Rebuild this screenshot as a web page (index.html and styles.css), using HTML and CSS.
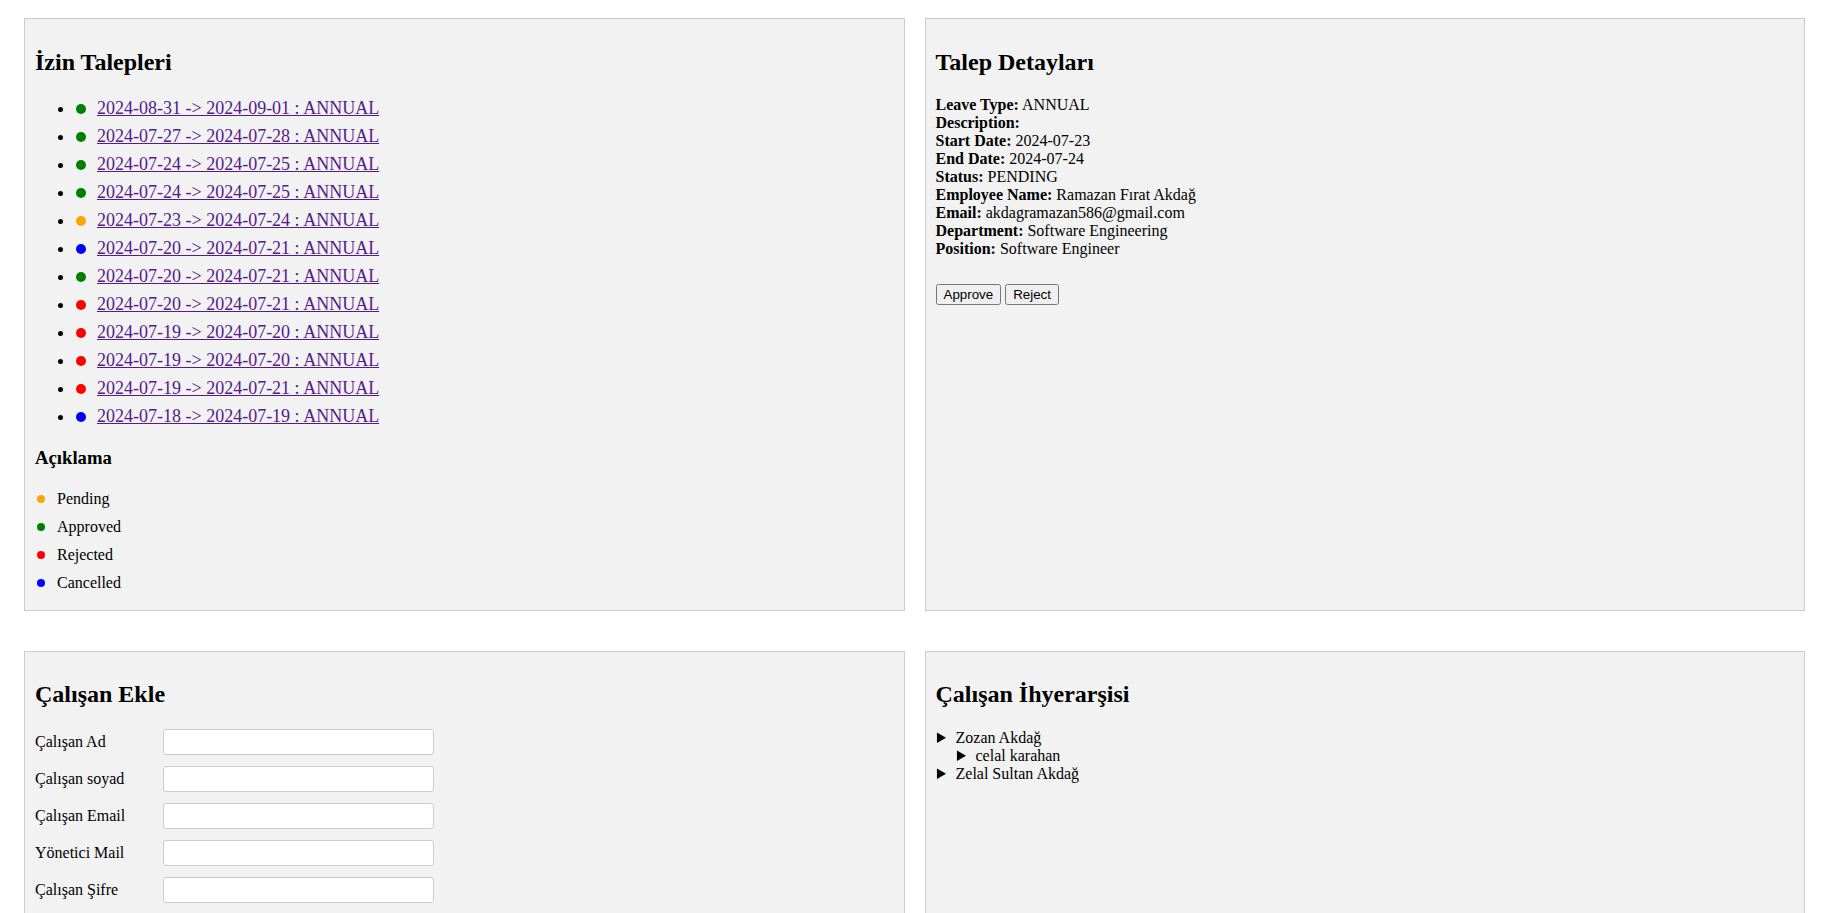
FILE: index.html
```html
<!DOCTYPE html>
<html lang="tr">
<head>
<meta charset="utf-8">
<title>İzin Yönetimi</title>
<link rel="stylesheet" href="styles.css">
</head>
<body>
<div class="dashboard">
  <section class="panel">
    <h2 class="panel-title">İzin Talepleri</h2>
    <ul class="requests">
      <li><span class="dot approved"></span><a href="#">2024-08-31 -&gt; 2024-09-01 : ANNUAL</a></li>
      <li><span class="dot approved"></span><a href="#">2024-07-27 -&gt; 2024-07-28 : ANNUAL</a></li>
      <li><span class="dot approved"></span><a href="#">2024-07-24 -&gt; 2024-07-25 : ANNUAL</a></li>
      <li><span class="dot approved"></span><a href="#">2024-07-24 -&gt; 2024-07-25 : ANNUAL</a></li>
      <li><span class="dot pending"></span><a href="#">2024-07-23 -&gt; 2024-07-24 : ANNUAL</a></li>
      <li><span class="dot cancelled"></span><a href="#">2024-07-20 -&gt; 2024-07-21 : ANNUAL</a></li>
      <li><span class="dot approved"></span><a href="#">2024-07-20 -&gt; 2024-07-21 : ANNUAL</a></li>
      <li><span class="dot rejected"></span><a href="#">2024-07-20 -&gt; 2024-07-21 : ANNUAL</a></li>
      <li><span class="dot rejected"></span><a href="#">2024-07-19 -&gt; 2024-07-20 : ANNUAL</a></li>
      <li><span class="dot rejected"></span><a href="#">2024-07-19 -&gt; 2024-07-20 : ANNUAL</a></li>
      <li><span class="dot rejected"></span><a href="#">2024-07-19 -&gt; 2024-07-21 : ANNUAL</a></li>
      <li><span class="dot cancelled"></span><a href="#">2024-07-18 -&gt; 2024-07-19 : ANNUAL</a></li>
    </ul>
    <h3 class="legend-title">Açıklama</h3>
    <div class="legend">
      <div class="legend-item"><span class="legend-dot pending"></span><span>Pending</span></div>
      <div class="legend-item"><span class="legend-dot approved"></span><span>Approved</span></div>
      <div class="legend-item"><span class="legend-dot rejected"></span><span>Rejected</span></div>
      <div class="legend-item"><span class="legend-dot cancelled"></span><span>Cancelled</span></div>
    </div>
  </section>

  <section class="panel">
    <h2 class="panel-title">Talep Detayları</h2>
    <div class="details">
      <div><strong>Leave Type:</strong> ANNUAL</div>
      <div><strong>Description:</strong></div>
      <div><strong>Start Date:</strong> 2024-07-23</div>
      <div><strong>End Date:</strong> 2024-07-24</div>
      <div><strong>Status:</strong> PENDING</div>
      <div><strong>Employee Name:</strong> Ramazan Fırat Akdağ</div>
      <div><strong>Email:</strong> akdagramazan586@gmail.com</div>
      <div><strong>Department:</strong> Software Engineering</div>
      <div><strong>Position:</strong> Software Engineer</div>
    </div>
    <div class="actions">
      <button type="button" class="btn">Approve</button>
      <button type="button" class="btn">Reject</button>
    </div>
  </section>

  <section class="panel panel--lower">
    <h2 class="panel-title">Çalışan Ekle</h2>
    <form class="form">
      <div class="form-row"><label class="form-label">Çalışan Ad</label><input class="form-input" type="text"></div>
      <div class="form-row"><label class="form-label">Çalışan soyad</label><input class="form-input" type="text"></div>
      <div class="form-row"><label class="form-label">Çalışan Email</label><input class="form-input" type="email"></div>
      <div class="form-row"><label class="form-label">Yönetici Mail</label><input class="form-input" type="email"></div>
      <div class="form-row"><label class="form-label">Çalışan Şifre</label><input class="form-input" type="password"></div>
    </form>
  </section>

  <section class="panel panel--lower">
    <h2 class="panel-title">Çalışan İhyerarşisi</h2>
    <ul class="tree">
      <li>Zozan Akdağ
        <ul class="tree">
          <li>celal karahan</li>
        </ul>
      </li>
      <li>Zelal Sultan Akdağ</li>
    </ul>
  </section>
</div>
</body>
</html>
```

FILE: styles.css
```css
html, body {
  background: #ffffff;
}

body {
  margin: 0;
  font-family: "Liberation Serif", "Times New Roman", serif;
  font-size: 16px;
  color: #000000;
}

.dashboard {
  display: grid;
  grid-template-columns: 1fr 1fr;
  column-gap: 20px;
  row-gap: 40px;
  padding: 18px 20px 0 24px;
}

.panel {
  background: #f2f2f2;
  border: 1px solid #cccccc;
  padding: 10px;
  min-width: 0;
}

.panel-title {
  font-size: 24px;
  font-weight: bold;
  margin: 20px 0;
}

.panel--lower .panel-title {
  margin: 19px 0 21px;
}

/* requests list */
.requests {
  margin: 16px 0;
  padding-top: 2px;
  padding-left: 40px;
}

.requests li {
  font-size: 18px;
  line-height: 21px;
  margin-bottom: 7px;
}

.requests a {
  color: #551a8b;
  text-decoration: underline;
}

.dot {
  display: inline-block;
  width: 10px;
  height: 10px;
  border-radius: 50%;
  margin-left: 1px;
  margin-right: 11px;
  vertical-align: middle;
  position: relative;
  top: -1px;
}

.pending { background: #ffa500; }
.approved { background: #008000; }
.rejected { background: #ff0000; }
.cancelled { background: #0000ff; }

.legend-title {
  font-size: 18.72px;
  font-weight: bold;
  margin: 20px 0 21px;
}

.legend-item {
  display: flex;
  align-items: center;
  line-height: 18px;
  margin-bottom: 10px;
}

.legend-item:last-child {
  margin-bottom: 8px;
}

.legend-dot {
  display: inline-block;
  width: 8px;
  height: 8px;
  border-radius: 50%;
  margin-left: 2px;
  margin-right: 12px;
}

/* details */
.details {
  margin: 16px 0;
  line-height: 18px;
}

.actions {
  margin-top: 26px;
}

.btn {
  font-family: "Liberation Sans", Arial, sans-serif;
  font-size: 13.333px;
}

/* form */
.form {
  margin: 0;
}

.form-row {
  display: flex;
  align-items: center;
  margin-bottom: 11px;
}

.form-label {
  flex: 0 0 128px;
  line-height: 18px;
}

.form-input {
  box-sizing: border-box;
  width: 271px;
  height: 26px;
  padding: 4px;
  border: 1px solid #cccccc;
  border-radius: 3px;
  background: #ffffff;
  font-family: "Liberation Sans", Arial, sans-serif;
  font-size: 13.333px;
}

/* tree */
.tree {
  margin: 0;
  padding-left: 20px;
  list-style-type: disclosure-closed;
  line-height: 18px;
}
```
